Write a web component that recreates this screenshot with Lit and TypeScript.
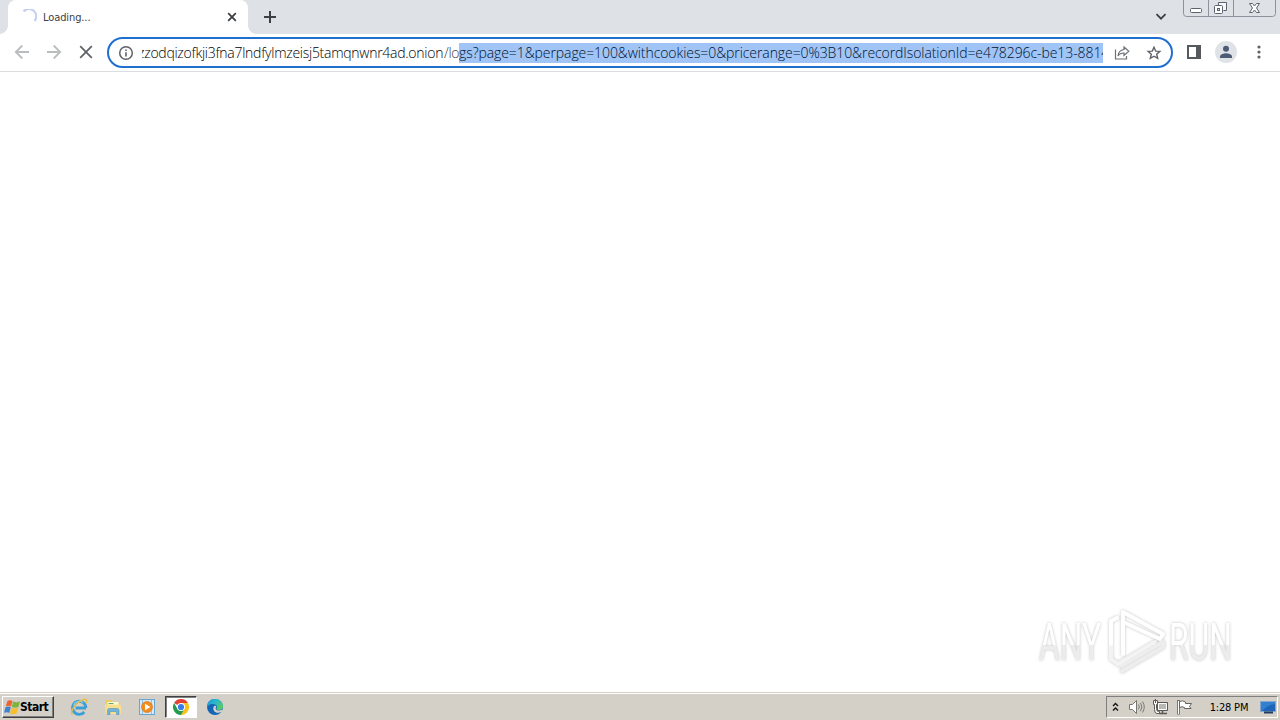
import { LitElement, html, css } from 'lit';
import { customElement, property } from 'lit/decorators.js';

/**
 * The tab row, with the window buttons at its right end.
 */
@customElement('tab-strip')
export class TabStrip extends LitElement {
  @property({ type: String })
  label = '';

  render() {
    return html`
      <div class="tab">
        <svg class="spinner" width="16" height="16" viewBox="0 0 16 16">
          <path d="M2.500 2.500A7 7 0 0 1 13.500 12" fill="none" stroke="#c3cff2" stroke-width="2" />
        </svg>
        <span class="label">${this.label}</span>
        <svg width="16" height="16" viewBox="0 0 16 16">
          <path d="M4.2 4.2l7.6 7.6M11.8 4.2l-7.6 7.6" stroke="#3c4043" stroke-width="1.8" />
        </svg>
      </div>
      <svg class="add" width="14" height="14" viewBox="0 0 14 14">
        <path d="M7 1v12M1 7h12" stroke="#3c4043" stroke-width="2" />
      </svg>
      <svg class="search" width="12" height="8" viewBox="0 0 12 8">
        <path d="M1.5 1.2L6 5.7l4.5-4.5" fill="none" stroke="#3c4043" stroke-width="1.8" />
      </svg>
      <svg class="window" width="94" height="18" viewBox="0 0 94 18">
        <path d="M.5 0V13.500a3 3 0 0 0 3 3H89.500a3 3 0 0 0 3-3V0M25.500 0V16M50.500 0V16" fill="none" stroke="#8d929c" />
        <rect x="7.500" y="8.500" width="11" height="4" rx="1" fill="#fff" stroke="#5c6270" />
        <path d="M35.500 5.500V2.500h8v8h-3" fill="#f5f6f8" stroke="#5c6270" />
        <rect x="31.500" y="5.500" width="8" height="8" rx="1" fill="#fff" stroke="#5c6270" />
        <rect x="34.500" y="8.500" width="2" height="2" fill="#dee1e6" stroke="#5c6270" />
        <path d="M66.500 3.500h3l2 2.500 2-2.500h3l-3 4.500 3 4.500h-3l-2-2.500-2 2.500h-3l3-4.500z" fill="#fff" stroke="#5c6270" />
      </svg>
    `;
  }

  static styles = css`
    :host {
      display: flex;
      height: 34px;
      background: #dee1e6;
    }

    svg {
      display: block;
      flex: none;
    }

    .tab {
      position: relative;
      display: flex;
      align-items: center;
      box-sizing: border-box;
      width: 240px;
      margin-left: 8px;
      padding: 0 8px 0 13px;
      border-radius: 8px 8px 0 0;
      background: #fff;
    }

    /* Curved feet where the tab meets the toolbar */
    .tab::before,
    .tab::after {
      content: '';
      position: absolute;
      bottom: 0;
      width: 8px;
      height: 8px;
    }

    .tab::before {
      left: -8px;
      background: radial-gradient(circle at 0 0, transparent 7.5px, #fff 8px);
    }

    .tab::after {
      right: -8px;
      background: radial-gradient(circle at 100% 0, transparent 7.5px, #fff 8px);
    }

    .spinner {
      margin-right: 6px;
    }

    .label {
      flex: 1;
      color: #3c4043;
      font: 11px 'DejaVu Sans Condensed', 'DejaVu Sans', sans-serif;
      font-stretch: condensed;
      letter-spacing: -0.1px;
    }

    .add {
      margin: 10px 0 0 15px;
    }

    .search {
      margin: 13px 16px 0 auto;
    }

    .window {
      margin-right: 3px;
    }
  `;
}

/**
 * Navigation buttons, the address field and the browser actions.
 */
@customElement('browser-toolbar')
export class BrowserToolbar extends LitElement {
  @property({ type: String })
  domain = '';

  @property({ type: String })
  path = '';

  @property({ type: String })
  selection = '';

  render() {
    return html`
      <svg class="nav" width="16" height="16" viewBox="0 0 16 16">
        <path d="M15 8H2M8.300 1.500L1.800 8l6.500 6.500" fill="none" stroke="#babcbe" stroke-width="1.800" />
      </svg>
      <svg class="nav" width="16" height="16" viewBox="0 0 16 16">
        <path d="M1 8h13M7.700 1.500L14.200 8l-6.500 6.500" fill="none" stroke="#babcbe" stroke-width="1.800" />
      </svg>
      <svg class="nav" width="16" height="16" viewBox="0 0 16 16">
        <path d="M2.200 2.200l11.600 11.600M13.800 2.200L2.200 13.800" stroke="#5f6368" stroke-width="1.800" />
      </svg>
      <div class="omnibox">
        <svg width="16" height="16" viewBox="0 0 16 16">
          <circle cx="8" cy="8" r="6.300" fill="none" stroke="#5f6368" stroke-width="1.500" />
          <path d="M8 7.200v4.200M8 4.400v1.600" stroke="#5f6368" stroke-width="1.600" />
        </svg>
        <div class="url"><span class="domain">${this.domain}</span><span class="path">${this.path}</span><span class="selection">${this.selection}</span></div>
        <svg class="share" width="16" height="16" viewBox="0 0 16 16">
          <path d="M1.500 4.500v9.500h11v-3" fill="none" stroke="#6b6f74" stroke-width="1.200" />
          <path d="M10 2l4.800 4.200L10 10.400V8C7.200 8 5.300 8.800 4 11c.3-3.500 2.500-6 6-6.500z" fill="none" stroke="#6b6f74" stroke-width="1.200" />
        </svg>
        <svg class="star" width="16" height="16" viewBox="0 0 16 16">
          <path d="M8 2.200l1.700 3.900 4.200.3-3.200 2.800 1 4.200L8 11.200l-3.700 2.200 1-4.200-3.200-2.800 4.200-.3z" fill="none" stroke="#5f6368" stroke-width="1.400" />
        </svg>
      </div>
      <svg class="panel" width="14" height="14" viewBox="0 0 14 14">
        <rect x="1" y="1" width="12" height="12" fill="none" stroke="#55595d" stroke-width="2" />
        <rect x="9" y="1" width="4" height="12" fill="#55595d" />
      </svg>
      <svg class="avatar" width="22" height="22" viewBox="0 0 22 22">
        <circle cx="11" cy="11" r="11" fill="#dfe2e7" />
        <circle cx="11" cy="7.700" r="3" fill="#4c5a75" />
        <path d="M5 17v-1.500c0-2 4-3.200 6-3.200s6 1.200 6 3.200V17z" fill="#4c5a75" />
      </svg>
      <svg width="4" height="14" viewBox="0 0 4 14">
        <g fill="#5f6368">
          <circle cx="2" cy="2" r="1.600" />
          <circle cx="2" cy="7" r="1.600" />
          <circle cx="2" cy="12" r="1.600" />
        </g>
      </svg>
    `;
  }

  static styles = css`
    :host {
      display: flex;
      align-items: center;
      box-sizing: border-box;
      height: 38px;
      padding: 0 20px 1px 14px;
      border-bottom: 1px solid #dadce0;
      background: #fff;
    }

    svg {
      display: block;
      flex: none;
    }

    .nav {
      margin-right: 16px;
    }

    .omnibox {
      display: flex;
      align-items: center;
      box-sizing: border-box;
      width: 1066px;
      height: 31px;
      margin: 1px 14px 0 -3px;
      padding: 0 9px;
      border: 2px solid #1f6fd0;
      border-radius: 16px;
    }

    .url {
      display: flex;
      width: 961px;
      margin-left: 8px;
      overflow: hidden;
      color: #000;
      font: 300 14px/20px 'Open Sans', 'Noto Sans', sans-serif;
      white-space: nowrap;
    }

    .domain {
      flex: none;
      box-sizing: border-box;
      width: 306px;
      margin-left: -4px;
      letter-spacing: -0.27px;
    }

    .path {
      flex: none;
      width: 15px;
      color: #3c4043;
      letter-spacing: -0.3px;
    }

    .selection {
      flex: none;
      width: 644px;
      overflow: hidden;
      background: #9fc4f5;
      color: #001230;
      letter-spacing: -0.08px;
    }

    .share {
      margin-left: 11px;
    }

    .star {
      margin-left: 16px;
    }

    .avatar {
      margin: 0 20px 0 14px;
    }
  `;
}

/**
 * The desktop task bar: start button, pinned programs and notification area.
 */
@customElement('task-bar')
export class TaskBar extends LitElement {
  @property({ type: String })
  time = '';

  render() {
    return html`
      <div class="start">
        <svg width="17" height="16" viewBox="0 0 17 16">
          <path d="M3.500 2Q6 .5 8.500 2L7 7.500Q4.500 6 1.800 7.300z" fill="#ef6330" />
          <path d="M9.200 2.300Q12 4 16 2.300L14.500 8Q11 9.300 7.700 8z" fill="#7cb342" />
          <path d="M1.500 8.200Q4.300 7 6.800 8.300L5.300 14Q3 12.500 0 13.800z" fill="#3d83d1" />
          <path d="M7.500 8.800Q10.500 10.300 14.200 8.800L12.500 14.500Q9 16 6 14.500z" fill="#f8bd2c" />
        </svg>
        <span>Start</span>
      </div>
      <div class="programs">
        <div class="program">
          <svg width="18" height="18" viewBox="0 0 18 18">
            <path d="M16 10H5.500M15.800 10a6.600 6.600 0 1 0-1.500 4" fill="none" stroke="#3c9fd8" stroke-width="2.900" />
            <path d="M3.600 7.500A6 6 0 0 1 13 4.500" fill="none" stroke="#8bd0f1" stroke-width="1.200" />
            <path d="M2.500 16.700C-1 14.500 5.500 5 12.500 1.800c4-1.600 5 .3 3.700 3.200" fill="none" stroke="#e5bd48" stroke-width="1.400" />
          </svg>
        </div>
        <div class="program">
          <svg width="18" height="18" viewBox="0 0 18 18">
            <path d="M1 3l1-1h6l1 2h7v12H1.500z" fill="#edcd68" />
            <path d="M3.500 4h11v4h-11z" fill="#fff8d4" />
            <path d="M4.500 5.500h5" stroke="#58ae76" />
            <path d="M1 6.500h14.500l1.500 1V16H1.500z" fill="#f7df8d" />
            <path d="M3.500 16.500v-4q0-2 2-2h7.500q2 0 2 2v4h-2.500v-3H6v3z" fill="#72b5df" stroke="#4b92c3" stroke-width=".6" />
          </svg>
        </div>
        <div class="program">
          <svg width="18" height="18" viewBox="0 0 18 18">
            <rect x="1.500" y="1.500" width="15" height="15" fill="#d5e9f8" stroke="#67a5d3" />
            <path d="M4.500 2v14M13.500 2v14" stroke="#8fc0e4" />
            <circle cx="9" cy="9" r="5.500" fill="#f38b1d" stroke="#d8700d" stroke-width=".6" />
            <path d="M7 5.700v6.600L12.500 9z" fill="#fff" />
          </svg>
        </div>
        <div class="program active">
          <svg width="16" height="16" viewBox="0 0 16 16">
            <path d="M8 8L1.070 4A8 8 0 0 1 14.930 4H8z" fill="#e34133" />
            <path d="M8 4h6.930A8 8 0 0 1 8 16l3.460-6z" fill="#fbc116" />
            <path d="M1.070 4A8 8 0 0 0 8 16l3.460-6L4.540 10z" fill="#269b4b" />
            <circle cx="8" cy="8" r="4" fill="#fff" />
            <circle cx="8" cy="8" r="3.100" fill="#387de8" />
          </svg>
        </div>
        <div class="program">
          <svg width="16" height="16" viewBox="0 0 16 16">
            <defs>
              <linearGradient id="wave" x2="1" y2=".6">
                <stop stop-color="#2190d8" />
                <stop offset=".5" stop-color="#28b7cc" />
                <stop offset="1" stop-color="#58cb65" />
              </linearGradient>
            </defs>
            <circle cx="8" cy="8" r="8" fill="#1266b6" />
            <path d="M0 8a8 8 0 0 1 16-.5c0 3-3 4.500-6 3-1.200-.6 0-1.300 0-2.500C10 6 7.500 4.700 5 5 2.500 5.200.8 6.500 0 8z" fill="url(#wave)" />
            <path d="M6.500 8c-1 3 1.500 6.500 5.500 5.700 1.300-.2 2.300-.7 3-1.200l-.8 1.700L16 11l-1-.200c-3 1.400-6 .700-6.300-1.300-.100-1 .5-1.700.300-2.300C8.500 6.500 7 7 6.500 8z" fill="#d4d0c8" />
          </svg>
        </div>
      </div>
      <div class="tray">
        <svg width="7" height="10" viewBox="0 0 7 10">
          <path d="M1 4l2.500-2.500L6 4M1 8.500L3.500 6 6 8.500" fill="none" stroke="#111" stroke-width="1.400" />
        </svg>
        <svg class="sound" width="17" height="16" viewBox="0 0 17 16">
          <path d="M1.500 5.500h3L8.500 1.500v13l-4-4h-3z" fill="#fff" stroke="#77756f" />
          <path d="M10.500 5.500q1.600 2.500 0 5M12.500 3.800q2.800 4.200 0 8.400M14.500 2.500q3.500 5.500 0 11" fill="none" stroke="#7b7973" />
        </svg>
        <svg class="network" width="17" height="16" viewBox="0 0 17 16">
          <path d="M5.500 3.500h10v8h-10z" fill="#b9b7b1" stroke="#5a5954" />
          <path d="M6.500 4.500h8v6h-8z" fill="none" stroke="#fff" />
          <path d="M10.500 12v2M7 14.500h8" stroke="#5a5954" stroke-width="1.500" />
          <path d="M1.500 1.500h4v4h-1v4q0 3 2 3h1v2H5q-2.500 0-2.500-4v-5h-1z" fill="#fff" stroke="#5a5954" />
          <path d="M3.500 0v4" stroke="#5a5954" />
        </svg>
        <svg class="flag" width="17" height="16" viewBox="0 0 17 16">
          <path d="M2.500 1v14.500" stroke="#65635e" stroke-width="2.600" />
          <path d="M2.500 2v13" stroke="#fff" />
          <path d="M3.500 2.500q3-1.500 6 .5v1.500h6l-2 3 1.500 2H8.500V8.500q-2.500-1.500-5 0z" fill="#fff" stroke="#65635e" />
        </svg>
        <span class="time">${this.time}</span>
        <svg width="16" height="14" viewBox="0 0 16 14">
          <rect x=".5" y="1.500" width="15" height="10" fill="#1e64b9" stroke="#86a7cd" />
          <path d="M1 2h14v2Q8 4.500 2 11H1z" fill="#3380d0" />
          <path d="M4 12.500h9" stroke="#243c5c" stroke-width="2" />
        </svg>
      </div>
    `;
  }

  static styles = css`
    :host {
      display: flex;
      align-items: center;
      box-sizing: border-box;
      height: 28px;
      padding: 1px 2px 0;
      border-top: 1px solid #d4d0c8;
      background: #d4d0c8;
      box-shadow: inset 0 1px #fff;
    }

    svg {
      display: block;
      flex: none;
    }

    .start {
      display: flex;
      align-items: center;
      box-sizing: border-box;
      width: 52px;
      height: 22px;
      padding-left: 1px;
      border: 1px solid;
      border-color: #fff #404040 #404040 #fff;
      box-shadow: inset -1px -1px #808080;
      color: #000;
      font: bold 12px 'DejaVu Sans Condensed', 'DejaVu Sans', sans-serif;
      font-stretch: condensed;
      letter-spacing: -0.5px;
    }

    .start span {
      margin-left: -1px;
    }

    .programs {
      display: flex;
      gap: 2px;
      margin-left: 9px;
    }

    .program {
      display: flex;
      align-items: center;
      justify-content: center;
      box-sizing: border-box;
      width: 32px;
      height: 22px;
    }

    .active {
      border: 1px solid;
      border-color: #404040 #fff #fff #404040;
      background: #fff;
      box-shadow: inset 1px 1px #808080;
    }

    .tray {
      display: flex;
      align-items: center;
      box-sizing: border-box;
      width: 172px;
      height: 22px;
      margin-left: auto;
      padding: 0 1px 0 5px;
      border: 1px solid;
      border-color: #808080 #fff #fff #808080;
    }

    .sound {
      margin-left: 9px;
    }

    .network,
    .flag {
      margin-left: 7px;
    }

    .time {
      margin: 0 auto;
      padding-left: 5px;
      color: #000;
      font: 11px 'DejaVu Sans Condensed', 'DejaVu Sans', sans-serif;
      font-stretch: condensed;
      letter-spacing: -0.2px;
      white-space: nowrap;
    }
  `;
}

@customElement('app-root')
export class AppRoot extends LitElement {
  render() {
    return html`
      <tab-strip label="Loading..."></tab-strip>
      <browser-toolbar
        domain="zzodqizofkji3fna7lndfylmzeisj5tamqnwnr4ad.onion"
        path="/lo"
        selection="gs?page=1&perpage=100&withcookies=0&pricerange=0%3B10&recordIsolationId=e478296c-be13-8814"
      ></browser-toolbar>
      <main>
        <svg class="watermark" width="200" height="66" viewBox="0 0 200 66">
          <defs>
            <linearGradient id="letters" x2="0" y2="1">
              <stop offset=".54" stop-color="#fff" />
              <stop offset=".54" stop-color="#ececec" />
            </linearGradient>
          </defs>
          <text x="3" y="52" textLength="62" lengthAdjust="spacingAndGlyphs">ANY</text>
          <text x="133" y="52" textLength="63" lengthAdjust="spacingAndGlyphs">RUN</text>
          <g fill="none" stroke-width="4" stroke-linecap="round" stroke-linejoin="round">
            <path d="M82 56l4 2L127 34v5L86 63" stroke="#ededed" />
            <path d="M81 10l-6 3v38l7 5L119 34" stroke="#f3f3f3" />
            <path d="M81 10l-6 3v23M87 46V4l40 22-3 5L87 14" stroke="#fff" />
          </g>
        </svg>
      </main>
      <task-bar time="1:28 PM"></task-bar>
    `;
  }

  static styles = css`
    :host {
      display: flex;
      flex-direction: column;
      width: 1280px;
      height: 720px;
      overflow: hidden;
      background: #fff;
    }

    main {
      display: flex;
      flex: 1;
      align-items: flex-end;
      justify-content: flex-end;
      padding: 0 44px 18px 0;
    }

    .watermark {
      display: block;
      overflow: visible;
      filter: drop-shadow(0 0 1.5px rgba(0, 0, 0, 0.24));
    }

    .watermark text {
      fill: url(#letters);
      font: 51px 'Roboto', sans-serif;
    }
  `;
}

declare global {
  interface HTMLElementTagNameMap {
    'app-root': AppRoot;
    'tab-strip': TabStrip;
    'browser-toolbar': BrowserToolbar;
    'task-bar': TaskBar;
  }
}
